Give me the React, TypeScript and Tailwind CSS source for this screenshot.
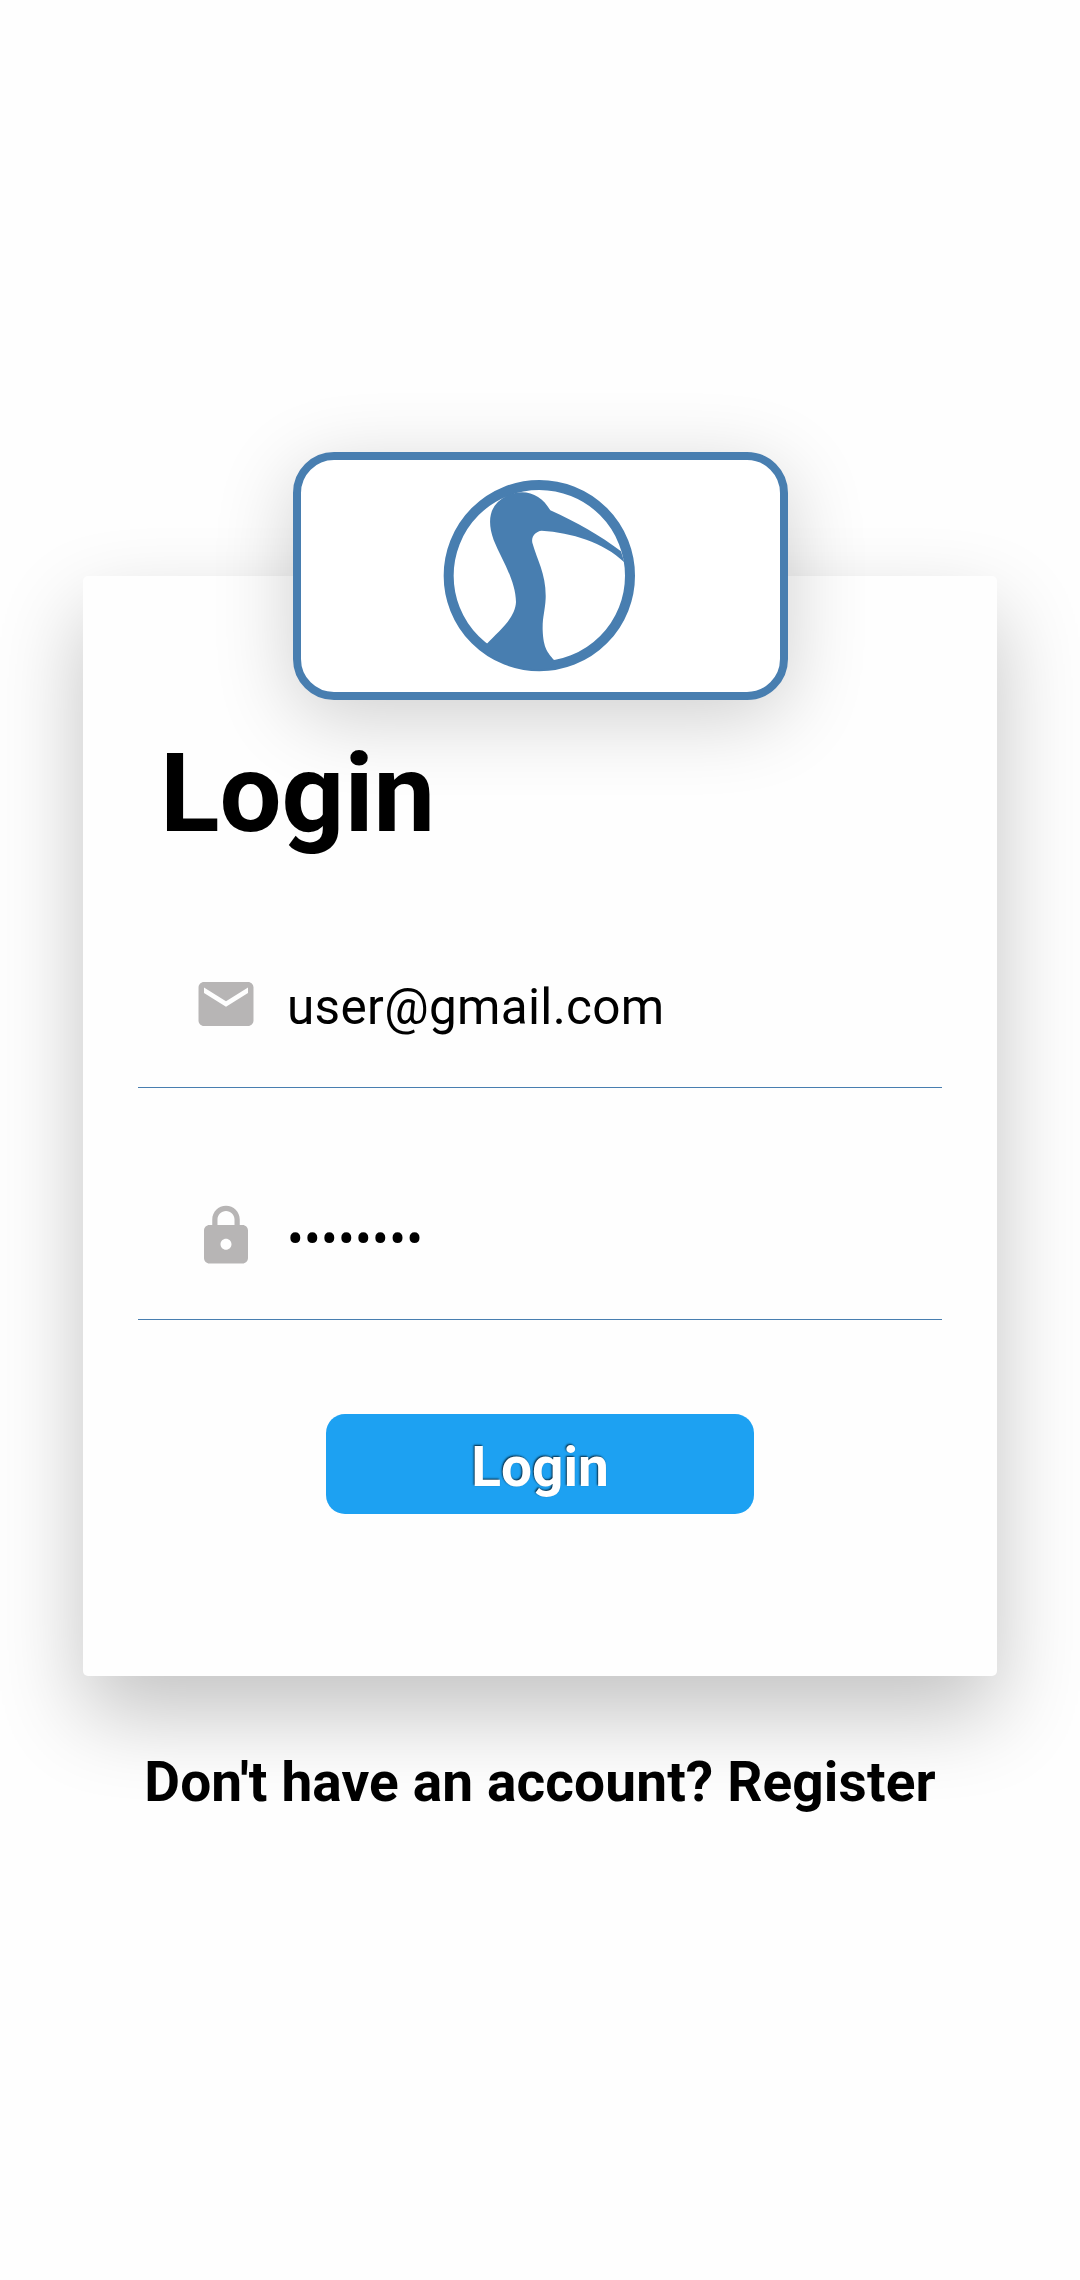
import { MdEmail, MdLock } from "react-icons/md";

function Logo() {
  return (
    <svg viewBox="0 0 660 660" className="mr-[2px] mb-[2px] size-[220px] shrink-0" aria-label="Heron logo">
      <circle cx="328" cy="332" r="272" fill="none" stroke="#487eb0" strokeWidth="30" />
      <path
        fill="#487eb0"
        d="M170 537 C205 499 256 460 258 411 C257 345 213 280 191 225 C168 160 182 117 230 92 C285 67 334 88 361 136 C440 172 510 211 573 259 L583 292 C520 231 425 203 335 197 C318 199 303 213 307 233 C322 287 349 327 347 400 C345 440 337 456 338 495 C340 550 353 563 373 586 L366 608 C290 622 224 603 160 560 Z"
      />
    </svg>
  );
}

export default function App() {
  return (
    <main className="flex h-[2280px] w-[1080px] flex-col items-center bg-[#fefefe] pt-[576px] font-['Roboto',sans-serif] text-black">
      <section className="flex h-[1100px] w-[914px] shrink-0 flex-col items-center rounded-[5px] bg-[#fefefe] shadow-[0_38px_86px_rgba(0,0,0,0.235)]">
        <div className="-mt-[124px] ml-px flex h-[248px] w-[495px] shrink-0 items-center justify-center rounded-[41px] border-8 border-[#487eb0] bg-white shadow-[0_18px_80px_rgba(0,0,0,0.19)]">
          <Logo />
        </div>

        <h1 className="mt-[29px] w-full pl-[77px] text-[110px] leading-[130px] font-bold">Login</h1>

        <div className="mt-[62px] flex h-[167px] w-[804px] items-center border-b border-[#487eb0] pl-[55px]">
          <MdEmail className="size-[66px] text-[#b7b5b5]" />
          <span className="ml-[28px] pt-[6px] text-[49.5px] leading-[58px] tracking-[0.32px]">user@gmail.com</span>
        </div>
        <div className="mt-[65px] flex h-[167px] w-[804px] items-center border-b border-[#487eb0] pl-[55px]">
          <MdLock className="size-[66px] text-[#b7b5b5]" />
          <span className="ml-[28px] pt-[6px] text-[49.5px] leading-[58px] tracking-[0.32px]">••••••••</span>
        </div>

        <button className="mt-[94px] h-[100px] w-[428px] rounded-[19px] bg-[#1da1f2] pt-[6px] text-[55px] leading-[64px] font-bold text-white [text-shadow:-1px_-1px_2px_rgba(0,0,0,0.75)]">
          Login
        </button>
      </section>

      <p className="mt-[74px] text-[55px] leading-[64px] font-bold tracking-[0.12px]">Don't have an account? Register</p>
    </main>
  );
}
